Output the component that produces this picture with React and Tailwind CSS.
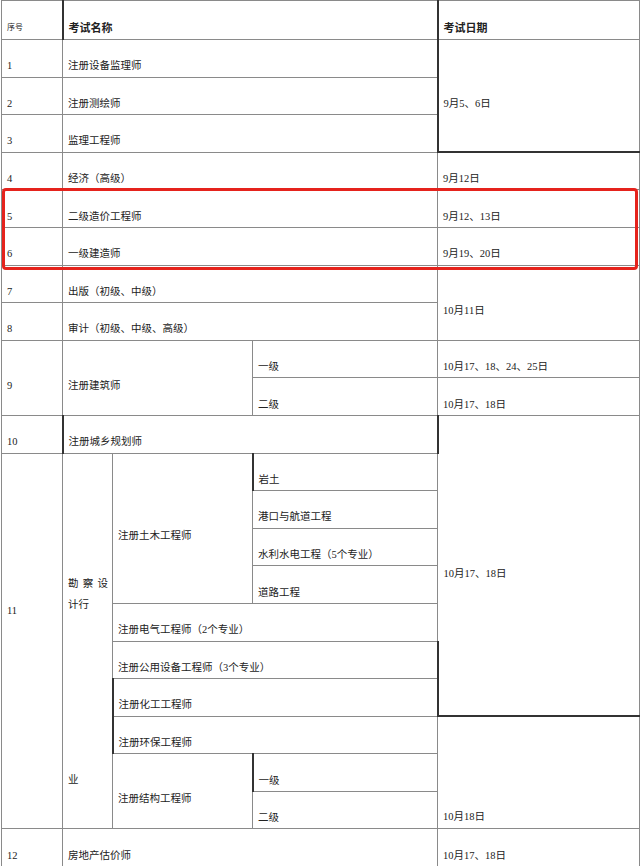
import React from 'react';

const line = 'border border-[#8a8a8a]';

const Td = ({ children, className = '', bottom = false, ...rest }) => (
  <td
    className={`${line} px-[5px] ${bottom ? 'align-bottom pt-0 pb-[4px]' : 'align-middle pt-4 pb-0'} leading-[14px] whitespace-nowrap ${className}`}
    {...rest}
  >
    {children}
  </td>
);

const rowH = 'h-[37.6px]';

const App = () => {
  return (
    <div
      className="relative w-[640px] h-[866px] bg-white text-[10.5px] text-[#222]"
      style={{ fontFamily: '"Liberation Serif", "Noto Sans CJK SC", sans-serif' }}
    >
      <table className="w-[638px] table-fixed border-collapse ml-[1px]">
        <colgroup>
          <col className="w-[61px]" />
          <col className="w-[50px]" />
          <col className="w-[140px]" />
          <col className="w-[185px]" />
          <col className="w-[202px]" />
        </colgroup>
        <tbody>
          <tr className="h-[39px]">
            <Td className="text-[8px] border-r-2 border-r-[#333]">序号</Td>
            <Td colSpan={3} className="font-bold text-[11px] border-r-2 border-r-[#333]">考试名称</Td>
            <Td className="font-bold text-[11px]">考试日期</Td>
          </tr>
          <tr className={rowH}>
            <Td>1</Td>
            <Td colSpan={3}>注册设备监理师</Td>
            <Td rowSpan={3} className="border-b-2 border-b-[#333] border-l-2 border-l-[#333]">9月5、6日</Td>
          </tr>
          <tr className={rowH}>
            <Td>2</Td>
            <Td colSpan={3}>注册测绘师</Td>
          </tr>
          <tr className={rowH}>
            <Td>3</Td>
            <Td colSpan={3}>监理工程师</Td>
          </tr>
          <tr className={rowH}>
            <Td>4</Td>
            <Td colSpan={3}>经济（高级）</Td>
            <Td>9月12日</Td>
          </tr>
          <tr className={rowH}>
            <Td>5</Td>
            <Td colSpan={3}>二级造价工程师</Td>
            <Td className="border-l-[#333]">9月12、13日</Td>
          </tr>
          <tr className={rowH}>
            <Td>6</Td>
            <Td colSpan={3}>一级建造师</Td>
            <Td>9月19、20日</Td>
          </tr>
          <tr className={rowH}>
            <Td>7</Td>
            <Td colSpan={3}>出版（初级、中级）</Td>
            <Td rowSpan={2}>10月11日</Td>
          </tr>
          <tr className={rowH}>
            <Td>8</Td>
            <Td colSpan={3}>审计（初级、中级、高级）</Td>
          </tr>
          <tr className={rowH}>
            <Td rowSpan={2}>9</Td>
            <Td colSpan={2} rowSpan={2}>注册建筑师</Td>
            <Td>一级</Td>
            <Td>10月17、18、24、25日</Td>
          </tr>
          <tr className={rowH}>
            <Td>二级</Td>
            <Td>10月17、18日</Td>
          </tr>
          <tr className={rowH}>
            <Td>10</Td>
            <Td colSpan={3} className="border-l-2 border-l-[#333] border-r-2 border-r-[#333]">注册城乡规划师</Td>
            <Td rowSpan={8} className="border-b-2 border-b-[#333]">10月17、18日</Td>
          </tr>
          <tr className={rowH}>
            <td rowSpan={10} className={`${line} align-top px-[5px] pt-[150px] leading-[14px]`}>11</td>
            <td rowSpan={10} className={`${line} align-top px-[5px] leading-[21px]`}>
              <div className="pt-[119px]">
                <div className="flex justify-between w-[40px]">
                  <span>勘</span>
                  <span>察</span>
                  <span>设</span>
                </div>
                <div>计行</div>
                <div className="mt-[154px]">业</div>
              </div>
            </td>
            <Td rowSpan={4}>注册土木工程师</Td>
            <Td className="border-l-2 border-l-[#333]">岩土</Td>
          </tr>
          <tr className={rowH}>
            <Td>港口与航道工程</Td>
          </tr>
          <tr className={rowH}>
            <Td>水利水电工程（5个专业）</Td>
          </tr>
          <tr className={rowH}>
            <Td>道路工程</Td>
          </tr>
          <tr className={rowH}>
            <Td colSpan={2}>注册电气工程师（2个专业）</Td>
          </tr>
          <tr className={rowH}>
            <Td colSpan={2} className="border-r-2 border-r-[#333]">注册公用设备工程师（3个专业）</Td>
          </tr>
          <tr className={rowH}>
            <Td colSpan={2} className="border-l-2 border-l-[#333] border-r-2 border-r-[#333]">注册化工工程师</Td>
          </tr>
          <tr className={rowH}>
            <Td colSpan={2} className="border-l-2 border-l-[#333]">注册环保工程师</Td>
            <Td rowSpan={3} bottom>10月18日</Td>
          </tr>
          <tr className={rowH}>
            <Td rowSpan={2}>注册结构工程师</Td>
            <Td className="border-l-2 border-l-[#333]">一级</Td>
          </tr>
          <tr className={rowH}>
            <Td>二级</Td>
          </tr>
          <tr className={rowH}>
            <Td>12</Td>
            <Td colSpan={3}>房地产估价师</Td>
            <Td>10月17、18日</Td>
          </tr>
        </tbody>
      </table>
      <div className="absolute left-[2px] top-[188px] w-[636px] h-[82px] border-[3px] border-[#e5231d] rounded-[4px]" />
    </div>
  );
};

export default App;
